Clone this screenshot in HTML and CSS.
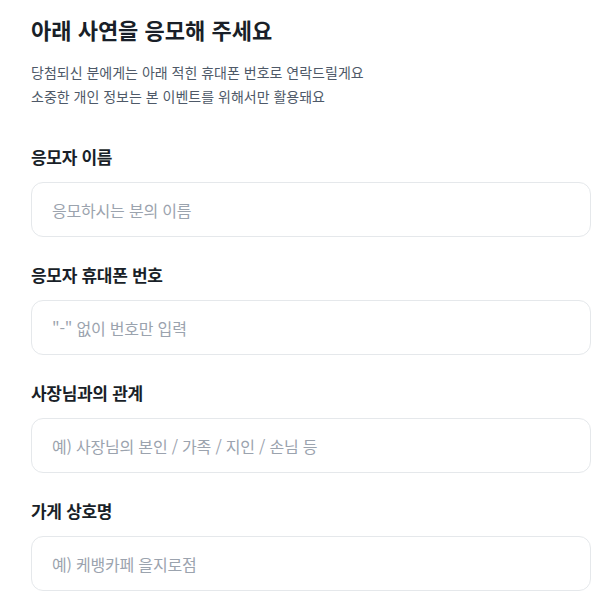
FILE: index.html
```html
<!DOCTYPE html>
<html lang="ko">
<head>
<meta charset="utf-8">
<title>사연 응모</title>
<link rel="stylesheet" href="styles.css">
</head>
<body>
<main class="page">
  <h1 class="title">아래 사연을 응모해 주세요</h1>
  <p class="desc">당첨되신 분에게는 아래 적힌 휴대폰 번호로 연락드릴게요<br>소중한 개인 정보는 본 이벤트를 위해서만 활용돼요</p>
  <form class="form">
    <label class="field">
      <span class="label">응모자 이름</span>
      <input class="input" type="text" placeholder="응모하시는 분의 이름">
    </label>
    <label class="field">
      <span class="label">응모자 휴대폰 번호</span>
      <input class="input" type="tel" placeholder="&quot;-&quot; 없이 번호만 입력">
    </label>
    <label class="field">
      <span class="label">사장님과의 관계</span>
      <input class="input" type="text" placeholder="예) 사장님의 본인 / 가족 / 지인 / 손님 등">
    </label>
    <label class="field">
      <span class="label">가게 상호명</span>
      <input class="input" type="text" placeholder="예) 케뱅카페 을지로점">
    </label>
  </form>
</main>
</body>
</html>
```

FILE: styles.css
```css
html, body {
  margin: 0;
  padding: 0;
  background: #ffffff;
}

body {
  font-family: "Noto Sans CJK KR", "Noto Sans", sans-serif;
  color: #191f28;
  overflow: hidden;
}

.page {
  padding: 13px 0 0 31px;
  width: 560px;
}

.title {
  margin: 0;
  font-size: 22px;
  line-height: 32px;
  font-weight: 700;
  letter-spacing: 0;
  color: #191f28;
}

.desc {
  margin: 15px 0 0;
  font-size: 14px;
  line-height: 24px;
  font-weight: 400;
  letter-spacing: 0;
  color: #4e5968;
}

.form {
  margin-top: 37px;
  display: flex;
  flex-direction: column;
  gap: 26px;
}

.field {
  display: flex;
  flex-direction: column;
  gap: 13px;
}

.label {
  font-size: 17px;
  line-height: 24px;
  font-weight: 700;
  letter-spacing: -0.3px;
  color: #191f28;
}

.input {
  box-sizing: border-box;
  width: 560px;
  height: 55px;
  margin: 0;
  padding: 0 20px;
  border: 1px solid #e5e8eb;
  border-radius: 12px;
  background: #ffffff;
  font-family: "Noto Sans CJK KR", "Noto Sans", sans-serif;
  font-size: 16px;
  letter-spacing: -0.2px;
  color: #191f28;
  outline: none;
}

.input::placeholder {
  color: #9ba3ae;
}
```
